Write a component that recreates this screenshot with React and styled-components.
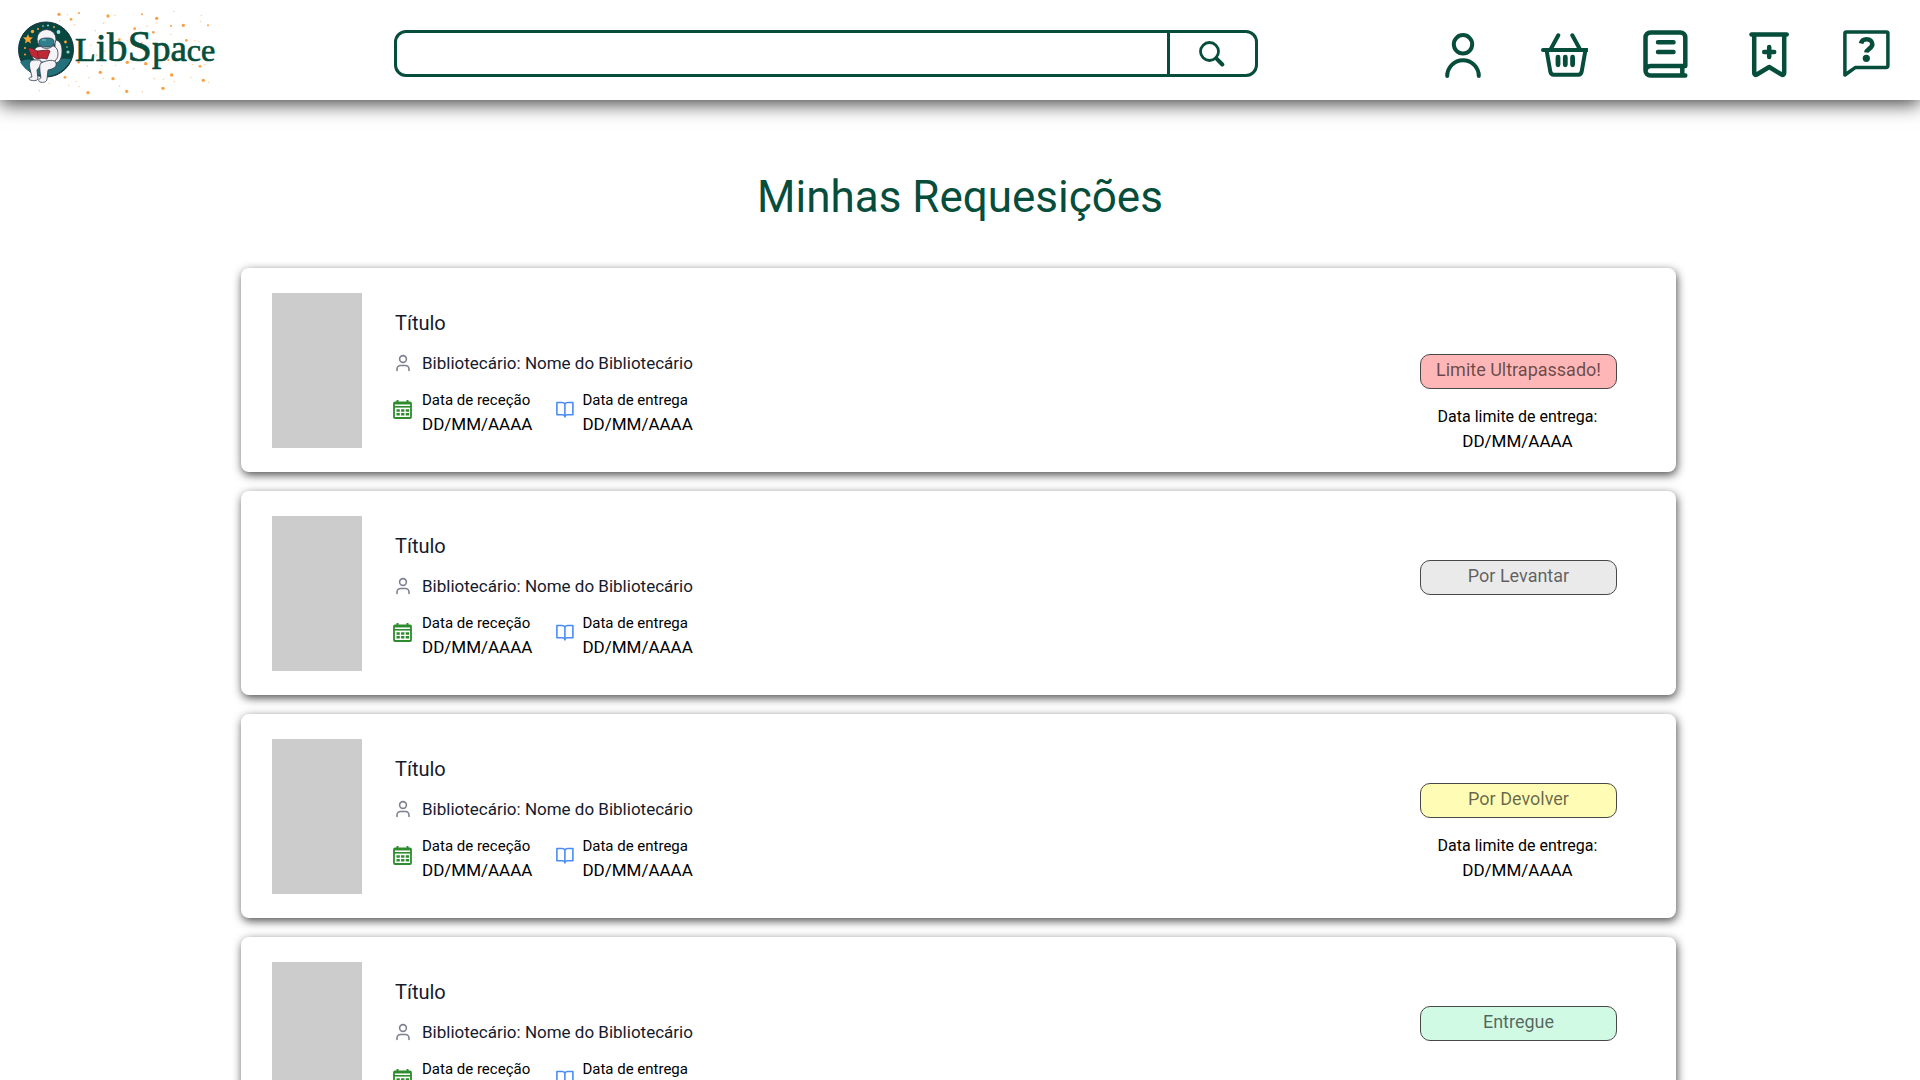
import React from "react";
import styled, { createGlobalStyle } from "styled-components";

const GREEN = "#064e3b";

const GlobalStyle = createGlobalStyle`
  *, *::before, *::after { box-sizing: border-box; }
  html, body { margin: 0; background: #fff; }
  body { font-family: Roboto, "Liberation Sans", sans-serif; color: #000; }
  h1, h2, p, ul, dl, dd { margin: 0; padding: 0; }
`;

const Header = styled.header`
  display: flex;
  align-items: center;
  justify-content: space-between;
  height: 100px;
  padding: 0 29px 0 17px;
  background: #fff;
  box-shadow: 0 4px 18px rgba(0, 0, 0, 0.75);
`;

const LogoLink = styled.a`
  display: block;
  flex: none;
  width: 196px;
  height: 100px;
  text-decoration: none;

  svg { display: block; overflow: visible; }
`;

const LogoText = styled.text`
  font-family: "Liberation Serif", serif;
  fill: ${GREEN};
  stroke: ${GREEN};
  stroke-width: 0.7px;
`;

const SearchForm = styled.form`
  display: flex;
  width: 45vw;
  height: 47px;
  margin-top: 7px;
  border: 3px solid ${GREEN};
  border-radius: 12px;
  overflow: hidden;
`;

const SearchInput = styled.input`
  flex: 1;
  min-width: 0;
  padding: 0 16px;
  border: 0;
  outline: 0;
  background: transparent;
  font: 18px Roboto, sans-serif;
`;

const SearchButton = styled.button`
  display: flex;
  align-items: center;
  justify-content: center;
  width: 88px;
  padding: 0 2px 0 0;
  border: 0;
  border-left: 3px solid ${GREEN};
  background: transparent;
  cursor: pointer;
`;

const Nav = styled.nav`
  display: flex;
  gap: 53px;
  margin-top: 8px;
`;

const NavLink = styled.a`
  display: block;
  width: 48px;
  height: 48px;
  color: ${GREEN};

  svg { display: block; }
`;

const Main = styled.main`
  padding-top: 72px;
`;

const PageTitle = styled.h1`
  color: ${GREEN};
  font-size: 44px;
  font-weight: 400;
  line-height: 50px;
  text-align: center;
`;

const CardList = styled.ul`
  && {
    display: flex;
    flex-direction: column;
    gap: 19px;
    margin-top: 46px;
    padding: 0 244px 19px 241px;
    list-style: none;
  }
`;

const Card = styled.li`
  display: flex;
  height: 204px;
  padding: 25px 59px 0 31px;
  border-radius: 8px;
  background: #fff;
  box-shadow: 1px 3px 10px rgba(0, 0, 0, 0.7);
`;

const Cover = styled.div`
  flex: none;
  width: 90px;
  height: 155px;
  background: #ccc;
`;

const Info = styled.div`
  flex: 1;
  padding: 18px 0 0 31px;
`;

const BookTitle = styled.h2`
  margin-left: 2px;
  color: #151a2d;
  font-size: 20px;
  font-weight: 400;
  line-height: 24px;
`;

const Librarian = styled.p`
  display: flex;
  align-items: center;
  gap: 10px;
  margin-top: 18px;
  color: #151a2d;
  font-size: 17px;
  line-height: 20px;
`;

const Dates = styled.div`
  display: flex;
  gap: 21px;
  margin-top: 17px;
`;

const DateItem = styled.div`
  display: flex;
  align-items: flex-start;
  gap: 10px;

  > svg { margin-top: 10px; }
`;

const DateLabel = styled.dt`
  font-size: 15px;
  line-height: 20px;
`;

const DateValue = styled.dd`
  font-size: 17px;
  line-height: 28px;
`;

const Status = styled.div`
  flex: none;
  width: 197px;
  padding-top: ${(p) => (p.$low ? 61 : 44)}px;
  text-align: center;
`;

const Badge = styled.span`
  display: block;
  height: 35px;
  border: 1px solid #484848;
  border-radius: 10px;
  background: ${(p) => p.$color};
  color: rgba(0, 0, 0, 0.6);
  font-size: 18px;
  line-height: 30px;
`;

const Deadline = styled.p`
  && { padding: 15px 2px 0 0; }
  font-size: 16px;
  line-height: 25px;
`;

const DeadlineDate = styled.span`
  display: block;
  font-size: 17px;
`;

const DOTS = [
  [177, 43, 5], [202, 44, 2], [213, 58, 4], [237, 39, 3], [179, 62, 2], [224, 74, 2],
  [324, 48, 5], [345, 46, 2], [426, 43, 3], [470, 55, 5], [521, 34, 2], [550, 76, 5],
  [604, 46, 2], [601, 64, 2], [624, 76, 3], [513, 78, 3], [460, 97, 4], [404, 86, 4],
  [286, 92, 2], [311, 69, 2], [358, 119, 4], [273, 136, 2], [513, 103, 2], [559, 121, 4],
  [584, 122, 2], [425, 130, 3], [441, 78, 2], [597, 124, 2], [313, 153, 2], [236, 187, 4],
  [262, 198, 2], [301, 217, 5], [305, 196, 2], [346, 196, 2], [382, 187, 5], [437, 191, 5],
  [401, 206, 2], [339, 236, 5], [310, 235, 2], [267, 233, 2], [195, 232, 4], [229, 244, 2],
  [206, 256, 2], [237, 260, 2], [264, 278, 5], [118, 272, 2], [147, 250, 2], [380, 274, 5],
  [427, 275, 2], [359, 258, 2], [489, 265, 5], [515, 225, 5], [490, 238, 2], [523, 244, 2],
  [463, 236, 2], [577, 193, 2], [600, 199, 4], [615, 194, 2], [610, 241, 5], [626, 247, 2],
  [573, 232, 2], [471, 68, 2], [505, 180, 3], [290, 165, 2],
];

function Logo() {
  return (
    <svg width="196" height="100" viewBox="17 0 196 100" role="img" aria-label="LibSpace">
      <circle cx="46" cy="49.500" r="27.500" fill="#07473f" stroke="#1d3340" strokeWidth="1" />
      <path d="M20 62c8-5 14-2 18 3s14 2 18-3 10-3 15-3c-5 11-15 17-25 17s-20-4-26-14z" fill="#24717c" />
      <path d="M28 34l1.300 3.200 3.600.3-2.700 2.400.8 3.500-3-1.900-3.100 1.900.8-3.500-2.700-2.400 3.600-.3z" fill="#ffa437" />
      <circle cx="32.500" cy="31.500" r="1.700" fill="#ffa437" />
      <circle cx="38" cy="29" r="1" fill="#ffa437" />
      <circle cx="25" cy="48" r="1" fill="#ffa437" />
      <circle cx="25" cy="54.500" r="1.100" fill="#ff8d2b" />
      <circle cx="58.500" cy="32" r="1.900" fill="#a8e0e2" />
      <circle cx="65.500" cy="42" r="1.400" fill="#ffa437" />
      <circle cx="68" cy="52" r="1.600" fill="#8acfd4" />
      <circle cx="48" cy="25.500" r=".9" fill="#a8e0e2" />
      <circle cx="54" cy="27" r=".9" fill="#ffa437" />
      <circle cx="67" cy="47" r=".8" fill="#a8e0e2" />
      <circle cx="43" cy="26" r=".7" fill="#fff" />
      <g fill="#f4f4f6" stroke="#30394c" strokeWidth=".8" strokeLinejoin="round">
        <path d="M55 40c5 0 7 5 7 11s-2 12-7 12z" />
        <path d="M37 47c-3 2-5 6-5 10l4 5h17c5-2 6-8 4-13-2-3-5-4-8-4z" />
        <path d="M33 60c-4 1-4 5-3 9l2 8c-3 0-4 2-2 3 3 1 7 1 8-1l-1-9 5-6-2-4z" />
        <path d="M41 63c-2 2-1 6-1 9l1 6c-3 1-3 3-1 4 3 1 7 0 7-3l1-9c5-1 9-3 8-7s-9-3-15 0z" />
        <ellipse cx="46.500" cy="39" rx="9.500" ry="9.500" />
      </g>
      <path d="M39 42c0-3 3-4 8-4s7 1 7 4-2 5-7 5-8-1-8-5z" fill="#2f808c" stroke="#26394a" strokeWidth=".8" />
      <path d="M42 40l4 0" stroke="#86cdd3" strokeWidth="1" />
      <path d="M28 48c4 0 6 1 9 3l11-1 2 1-3 8c-4-1-7-1-10 0-3-2-5-3-6-3z" fill="#bf2936" stroke="#5c1b2b" strokeWidth=".8" />
      <path d="M37 51l2 8" stroke="#6f1727" strokeWidth=".7" />
      <g fill="#fa9f42">
        {DOTS.map(([x, y, s], i) => (
          <circle key={i} cx={x / 3} cy={y / 3} r={s / 3} opacity={s < 3 ? 0.65 : 1} />
        ))}
      </g>
      <LogoText x="75" y="61" fontSize="37">
        <tspan fontSize="34">L</tspan>
        <tspan fontSize="40">i</tspan>
        <tspan fontSize="41">b</tspan>
        <tspan fontSize="44">S</tspan>
        <tspan>pa</tspan>
        <tspan fontSize="32">ce</tspan>
      </LogoText>
    </svg>
  );
}

function NavIcon({ width = 4.5, children }) {
  return (
    <svg width="48" height="48" viewBox="0 0 48 48" fill="none" stroke="currentColor" strokeWidth={width} strokeLinecap="round" strokeLinejoin="round" aria-hidden="true">
      {children}
    </svg>
  );
}

const NAV = [
  { label: "Perfil", width: 4, icon: (<><circle cx="24" cy="14.300" r="9.200" /><path d="M8.200 46a15.800 15.800 0 0 1 31.600 0" /></>) },
  { label: "Cesto", width: 4, icon: (
    <>
      <path d="M3 20h44M18.300 5.300l-7.600 14M32.300 5.300l7.600 14" />
      <path d="M6.700 21l3.600 20.500c.4 2 1.500 3.200 3.400 3.200h24.600c1.900 0 3-1.200 3.400-3.200L45.300 21" strokeWidth="4" />
      <path d="M18 27.200v7.600M25.300 27.200v7.600M32.600 27.200v7.600" strokeWidth="4.800" />
    </>
  ) },
  { label: "Requisições", icon: (
    <>
      <path d="M44.300 45.600H9.500a5 5 0 0 1-5-5V7.500a5 5 0 0 1 5-5h29.800a5 5 0 0 1 5 5V36H9.500a5 5 0 0 0-5 4.600" />
      <path d="M41.300 37v8" strokeLinecap="butt" />
      <path d="M17 12.300h15.500M17 22h15.500" />
    </>
  ) },
  { label: "Favoritos", icon: (
    <>
      <path d="M9.500 4.400h35.200" />
      <path d="M12.200 5v38c0 1.800 1.300 2.300 2.600 1.500L27.200 37l12.400 7.500c1.300.8 2.600.3 2.600-1.500V5" />
      <path d="M27.200 17v10M22.200 22h10" />
    </>
  ) },
  { label: "Ajuda", width: 3.5, icon: (
    <>
      <path d="M1.900 45V3.400a1.500 1.500 0 0 1 1.500-1.500h40a1.500 1.500 0 0 1 1.500 1.500v32a2 2 0 0 1-2 2H12.500z" />
      <path d="M18 13.500c.6-2.800 2.800-4.200 5.600-4.200 3.400 0 5.700 2 5.700 5 0 4.300-5.600 4.700-6 8.300" strokeWidth="4.600" strokeLinecap="butt" />
      <circle cx="23.300" cy="28.300" r="3.600" fill="currentColor" stroke="none" />
    </>
  ) },
];

function PersonIcon() {
  return (
    <svg width="19" height="19" viewBox="0 0 19 19" fill="none" stroke="#7d8090" strokeWidth="1.600" strokeLinecap="round" aria-hidden="true">
      <circle cx="10" cy="5" r="3.400" />
      <path d="M4 16.500V15a3.500 3.500 0 0 1 3.500-3.500h5A3.500 3.500 0 0 1 16 15v1.500" />
    </svg>
  );
}

function CalendarIcon() {
  return (
    <svg width="19" height="19" viewBox="0 0 19 19" fill="none" stroke="#2e8b2e" aria-hidden="true">
      <rect x="1" y="2.500" width="17" height="15.500" rx="1" strokeWidth="1.800" />
      <path d="M1 3.700h17" strokeWidth="1.500" />
      <path d="M1 6.800h17" strokeWidth="1.600" />
      <path d="M4.500 0v3M14.500 0v3" strokeWidth="2" />
      <path d="M3.500 10.500h12.500M3.500 14.300h12.500" strokeWidth="2.400" strokeDasharray="3.300 1.300" />
    </svg>
  );
}

function OpenBookIcon() {
  return (
    <svg width="19" height="19" viewBox="-3 0 19 19" fill="none" stroke="#4a8cf7" strokeWidth="1.600" strokeLinejoin="round" overflow="visible" aria-hidden="true">
      <path d="M8.900 4.300C8.500 3.200 7.500 2.500 6 2.500H.9v12.300h5.600c1.300 0 2 .6 2.400 1.700.4-1.100 1.100-1.700 2.400-1.700h5.600V2.500h-5.100c-1.500 0-2.500.7-2.900 1.800zM8.900 4.300v13.200" />
    </svg>
  );
}

const REQUESTS = [
  { status: "Limite Ultrapassado!", color: "#ffb6b6", deadline: true, low: true },
  { status: "Por Levantar", color: "#eaeaea" },
  { status: "Por Devolver", color: "#fffdb5", deadline: true },
  { status: "Entregue", color: "#d1fae5" },
];

function RequestCard({ status, color, deadline, low }) {
  return (
    <Card>
      <Cover />
      <Info>
        <BookTitle>Título</BookTitle>
        <Librarian><PersonIcon />Bibliotecário: Nome do Bibliotecário</Librarian>
        <Dates>
          <DateItem>
            <CalendarIcon />
            <dl><DateLabel>Data de receção</DateLabel><DateValue>DD/MM/AAAA</DateValue></dl>
          </DateItem>
          <DateItem>
            <OpenBookIcon />
            <dl><DateLabel>Data de entrega</DateLabel><DateValue>DD/MM/AAAA</DateValue></dl>
          </DateItem>
        </Dates>
      </Info>
      <Status $low={low}>
        <Badge $color={color}>{status}</Badge>
        {deadline && <Deadline>Data limite de entrega:<DeadlineDate>DD/MM/AAAA</DeadlineDate></Deadline>}
      </Status>
    </Card>
  );
}

export default function App() {
  return (
    <>
      <GlobalStyle />
      <Header>
        <LogoLink href="#inicio"><Logo /></LogoLink>
        <SearchForm role="search" onSubmit={(e) => e.preventDefault()}>
          <SearchInput type="search" aria-label="Pesquisar" />
          <SearchButton type="submit" aria-label="Pesquisar">
            <svg width="26" height="26" viewBox="0 0 26 26" fill="none" stroke={GREEN} strokeLinecap="round" aria-hidden="true">
              <circle cx="10.500" cy="10.500" r="9" strokeWidth="2.800" />
              <path d="M17.300 17.300l6 6.200" strokeWidth="4" />
            </svg>
          </SearchButton>
        </SearchForm>
        <Nav>
          {NAV.map((n) => (
            <NavLink key={n.label} href={"#" + n.label.toLowerCase()} aria-label={n.label}>
              <NavIcon width={n.width}>{n.icon}</NavIcon>
            </NavLink>
          ))}
        </Nav>
      </Header>
      <Main>
        <PageTitle>Minhas Requesições</PageTitle>
        <CardList>
          {REQUESTS.map((r) => <RequestCard key={r.status} {...r} />)}
        </CardList>
      </Main>
    </>
  );
}
